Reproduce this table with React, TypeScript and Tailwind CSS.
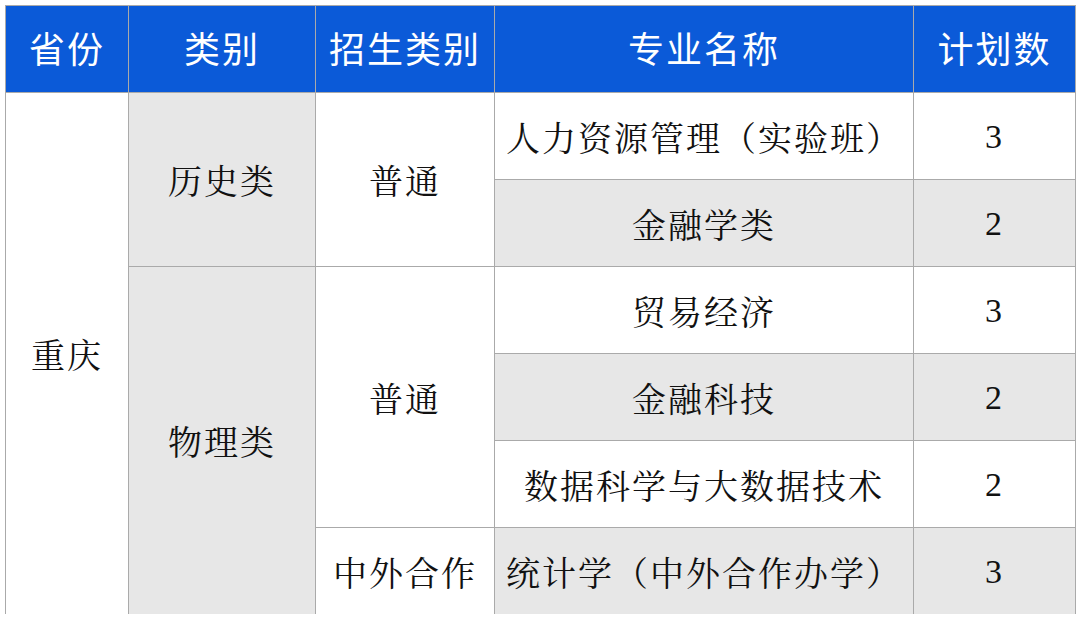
const head = ["省份", "类别", "招生类别", "专业名称", "计划数"];

const majors = [
  { name: "人力资源管理（实验班）", count: "3" },
  { name: "金融学类", count: "2" },
  { name: "贸易经济", count: "3" },
  { name: "金融科技", count: "2" },
  { name: "数据科学与大数据技术", count: "2" },
  { name: "统计学（中外合作办学）", count: "3" },
];

const body = "flex items-center justify-center text-[34px] text-[#111] tracking-[2px]";
const font = { fontFamily: '"Noto Serif CJK SC", "Liberation Serif", "Noto Sans CJK SC", serif' };

export default function App() {
  return (
    <div className="w-[1080px] h-[619px] bg-white overflow-hidden pt-[5px] pl-[5px]">
      <div
        className="grid w-[1071px] grid-cols-[122px_186px_178px_418px_161px] grid-rows-[86px_86px_86px_86px_86px_86px_86px] gap-px bg-[#aaaaaa] border-t border-l border-r border-[#aaaaaa]"
        style={font}
      >
        {head.map((h) => (
          <div
            key={h}
            className="flex items-center justify-center bg-[#0b5ad8] text-white text-[36px] tracking-[2px] pb-[4px] font-['Noto_Sans_CJK_SC',sans-serif]"
          >
            {h}
          </div>
        ))}

        <div className={`${body} bg-white col-start-1 row-start-2 row-span-6`}>重庆</div>
        <div className={`${body} bg-[#e7e7e7] col-start-2 row-start-2 row-span-2`}>历史类</div>
        <div className={`${body} bg-[#e7e7e7] col-start-2 row-start-4 row-span-4`}>物理类</div>
        <div className={`${body} bg-white col-start-3 row-start-2 row-span-2`}>普通</div>
        <div className={`${body} bg-white col-start-3 row-start-4 row-span-3`}>普通</div>
        <div className={`${body} bg-white col-start-3 row-start-7`}>中外合作</div>

        {majors.map((m, i) => (
          <div key={m.name} className="contents">
            <div
              className={`${body} col-start-4 ${i % 2 === 1 ? "bg-[#e7e7e7]" : "bg-white"}`}
              style={{ gridRowStart: i + 2 }}
            >
              {m.name}
            </div>
            <div
              className={`${body} col-start-5 font-['Liberation_Serif',serif] ${i % 2 === 1 ? "bg-[#e7e7e7]" : "bg-white"}`}
              style={{ gridRowStart: i + 2 }}
            >
              {m.count}
            </div>
          </div>
        ))}
      </div>
    </div>
  );
}
